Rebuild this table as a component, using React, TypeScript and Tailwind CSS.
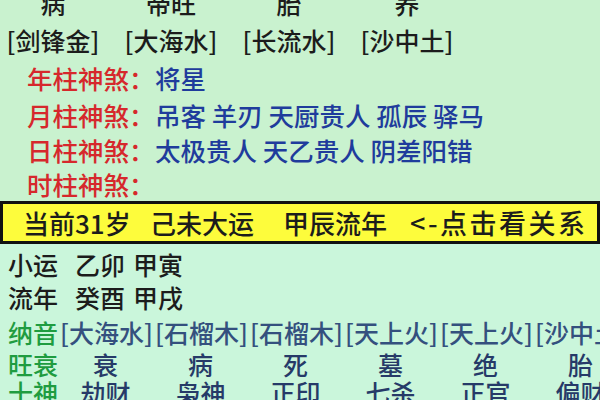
import React from 'react';

const font = { fontFamily: '"Noto Sans CJK SC", "Noto Sans", sans-serif' };

const topCols = [
    { state: '病', nayin: '[剑锋金]' },
    { state: '帝旺', nayin: '[大海水]' },
    { state: '胎', nayin: '[长流水]' },
    { state: '养', nayin: '[沙中土]' },
];

const shensha = [
    { label: '年柱神煞：', value: '将星', h: 'h-[38px]' },
    { label: '月柱神煞：', value: '吊客 羊刃 天厨贵人 孤辰 驿马', h: 'h-[36px]' },
    { label: '日柱神煞：', value: '太极贵人 天乙贵人 阴差阳错', h: 'h-[34px]' },
    { label: '时柱神煞：', value: '', h: 'h-[34px]' },
];

const nayin = ['[大海水]', '[石榴木]', '[石榴木]', '[天上火]', '[天上火]', '[沙中土]'];
const wangshuai = ['衰', '病', '死', '墓', '绝', '胎'];
const shishen = ['劫财', '枭神', '正印', '七杀', '正官', '偏财'];

const App: React.FC = () => {
    return (
        <div className="w-[600px] h-[400px] overflow-hidden bg-[#c9f2cf] text-[#1c1c1c] font-medium leading-none" style={font}>
            {/* 上半部分：长生 + 纳音 + 神煞 */}
            <div className="-mt-[15px]">
                <div className="flex gap-[24px] pl-[6px] h-[36px] items-center text-[25px]">
                    {topCols.map((c, i) => (
                        <div key={i} className="w-[94px] text-center">{c.state}</div>
                    ))}
                </div>
                <div className="flex gap-[24px] pl-[6px] h-[38px] items-center text-[25px]">
                    {topCols.map((c, i) => (
                        <div key={i} className="w-[94px] text-center whitespace-nowrap">{c.nayin}</div>
                    ))}
                </div>
                {shensha.map((r, i) => (
                    <div key={i} className={`flex items-center pl-[27px] text-[25.5px] ${r.h}`}>
                        <span className="w-[128px] text-[#d6282c] whitespace-nowrap">{r.label}</span>
                        <span className="text-[#1f3c9c] whitespace-nowrap">{r.value}</span>
                    </div>
                ))}
            </div>

            {/* 大运条 */}
            <div className="h-[43px] border-[3px] border-[#111] bg-[#fdfc3c] flex items-center text-[26px] whitespace-nowrap">
                <span className="ml-[20px] w-[127px]">当前31岁</span>
                <span className="w-[133px]">己未大运</span>
                <span className="w-[127px]">甲辰流年</span>
                <span className="text-[27px] tracking-[2.5px]">&lt;-点击看关系</span>
            </div>

            {/* 下半部分 */}
            <div className="bg-[#caf6db] pt-[3px] text-[25px] whitespace-nowrap">
                <div className="flex items-center h-[34px] pl-[8px]">
                    <span className="w-[67px]">小运</span>
                    <span className="w-[58px]">乙卯</span>
                    <span>甲寅</span>
                </div>
                <div className="flex items-center h-[33px] pl-[8px]">
                    <span className="w-[67px]">流年</span>
                    <span className="w-[58px]">癸酉</span>
                    <span>甲戌</span>
                </div>
                <div className="flex items-center h-[37px] pl-[8px]">
                    <span className="w-[52px] shrink-0 text-[#1f9c40]">纳音</span>
                    {nayin.map((n, i) => (
                        <span key={i} className="w-[95px] shrink-0 text-[#34507e]">{n}</span>
                    ))}
                </div>
                <div className="flex items-center h-[27px] pl-[8px]">
                    <span className="w-[50px] shrink-0 text-[#1f9c40]">旺衰</span>
                    {wangshuai.map((n, i) => (
                        <span key={i} className="w-[95px] shrink-0 text-center text-[#263a68]">{n}</span>
                    ))}
                </div>
                <div className="flex items-center h-[28px] pl-[8px]">
                    <span className="w-[50px] shrink-0 text-[#1f9c40]">十神</span>
                    {shishen.map((n, i) => (
                        <span key={i} className="w-[95px] shrink-0 text-center text-[#263a68]">{n}</span>
                    ))}
                </div>
            </div>
        </div>
    );
};

export default App;
